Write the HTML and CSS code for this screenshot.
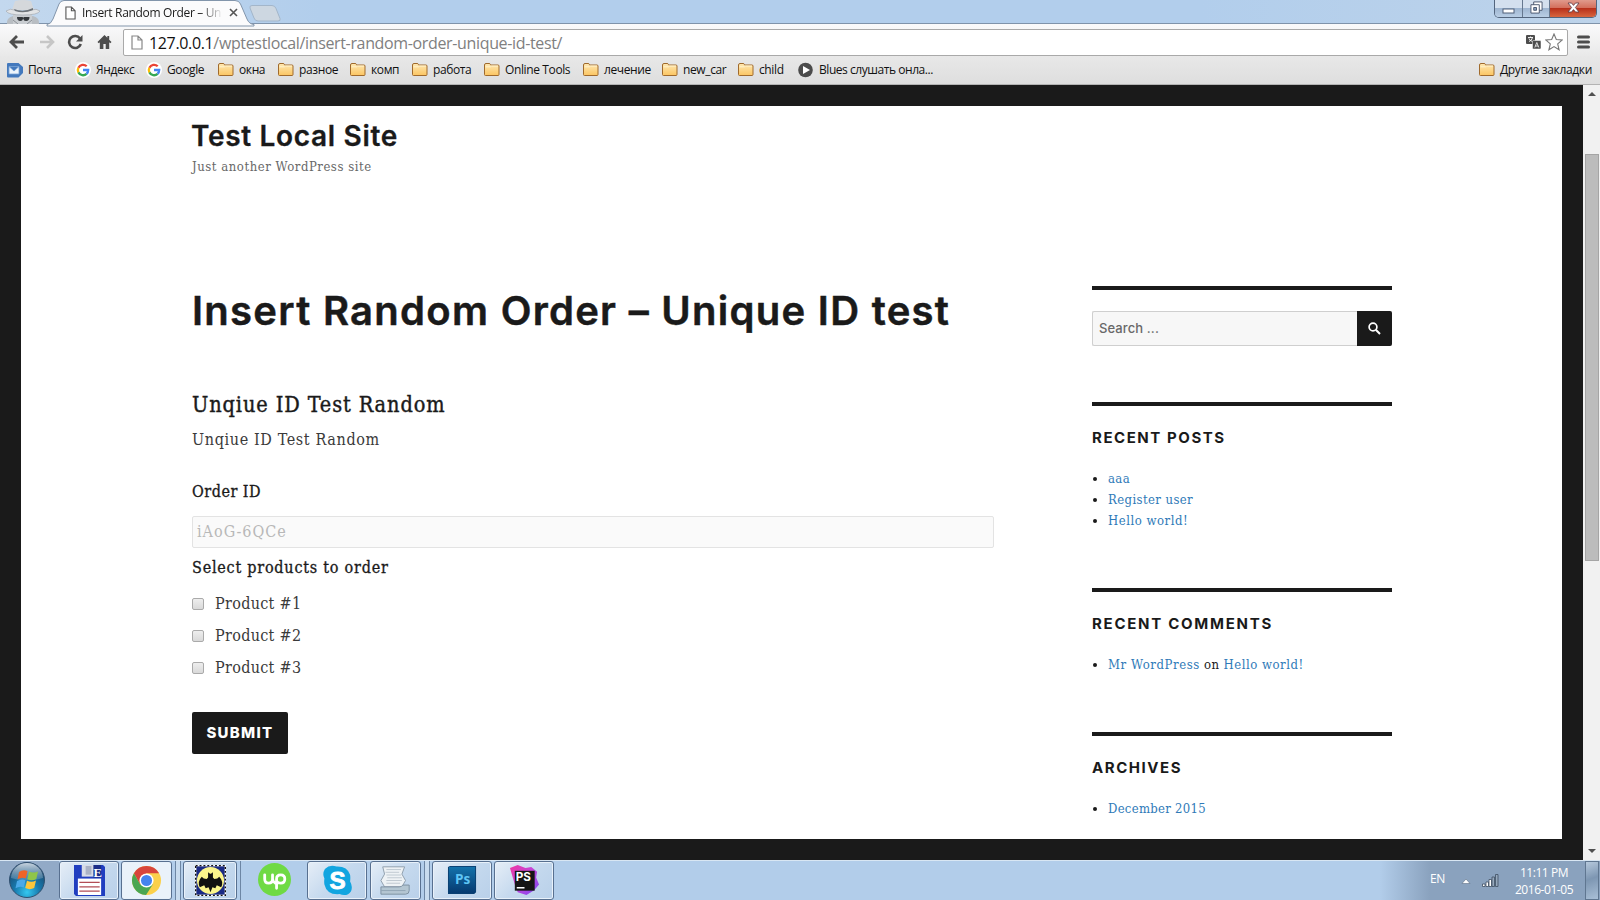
FILE: index.html
```html
<!DOCTYPE html>
<html lang="en">
<head>
<meta charset="utf-8">
<title>Insert Random Order – Unique ID test</title>
<link rel="stylesheet" href="styles.css">
</head>
<body>
<svg width="0" height="0" class="defs">
  <defs>
    <linearGradient id="fold" x1="0" y1="0" x2="0" y2="1"><stop offset="0" stop-color="#ffe9b4"/><stop offset="1" stop-color="#fbc562"/></linearGradient>
    <radialGradient id="orb" cx=".5" cy=".85" r=".8"><stop offset="0" stop-color="#35c8f0"/><stop offset=".45" stop-color="#1779ad"/><stop offset="1" stop-color="#1d4266"/></radialGradient>
    <linearGradient id="gloss" x1="0" y1="0" x2="0" y2="1"><stop offset="0" stop-color="#e4eef6" stop-opacity=".85"/><stop offset="1" stop-color="#9fb9cf" stop-opacity=".25"/></linearGradient>
    <linearGradient id="psg" x1="0" y1="0" x2="0" y2="1"><stop offset="0" stop-color="#1372ab"/><stop offset="1" stop-color="#063a70"/></linearGradient>
    <linearGradient id="storm" x1="0" y1="0" x2="1" y2="1"><stop offset="0" stop-color="#f0369f"/><stop offset=".45" stop-color="#c546d8"/><stop offset="1" stop-color="#7d48f5"/></linearGradient>
  </defs>
  <symbol id="folder" viewBox="0 0 16 16"><path d="M.500 3q0-1.500 1.500-1.500h3q1.200 0 1.500 1l.2.500h7.300q1 0 1 1v8.500q0 1-1 1H1.500q-1 0-1-1z" fill="url(#fold)" stroke="#a06a2c"/><path d="M1.500 4.800h5l1-.8h6.500" fill="none" stroke="#fff3cf"/></symbol>
  <symbol id="google" viewBox="0 0 16 16"><circle cx="8" cy="8" r="8" fill="#fff"/><g fill="none" stroke-width="2.300"><path d="M11.700 4.300A5.200 5.200 0 0 0 3.400 5.700" stroke="#ea4335"/><path d="M3.400 5.700a5.200 5.200 0 0 0 0 4.700" stroke="#fbbc05"/><path d="M3.400 10.400a5.200 5.200 0 0 0 8.200 1.400" stroke="#34a853"/><path d="M11.600 11.800A5.200 5.200 0 0 0 13.200 8H8" stroke="#4285f4"/></g></symbol>
  <symbol id="page" viewBox="0 0 12 15"><path d="M1 1h6l4 4v9H1zM7 1v4h4" fill="#fff" stroke="currentColor" stroke-width="1.200"/></symbol>
</svg>

<header class="titlebar">
  <svg class="incognito" viewBox="0 0 36 24"><path d="M2 24q-1-6 6-8l20 0q7 2 6 8z" fill="#b8bdc2"/><path d="M8 24V13h19v11z" fill="#c9cdd1"/><path d="M7 10L10 1q8-2 16 0l3 9z" fill="#d5d8db"/><path d="M1 11q5-3 8-1 9 3 18 0 4-2 8 1-2 4-17 4T1 11z" fill="#e2e4e6" stroke="#a5abb1" stroke-width=".7"/><path d="M9 9q9 4 19-1v2q-9 4-18 1z" fill="#6d7378"/><path d="M12 17h5.500l.7.800.8-.8h5.500q0 4-3.500 4-2.500 0-2.800-2.500-.7 2.500-2.700 2.500-3.500 0-3.500-4z" fill="#34383c"/><path d="M8 20l5 4M27 20l-5 4" stroke="#8b9096"/></svg>
  <div class="tab">
    <svg class="tab-shape" viewBox="0 0 208 25"><path d="M0 24.500Q4 24 6 19L12 4Q13.500.500 17 .500H188Q192 .500 193.500 4L200 19Q202 24 207 24.500V26H0z" fill="#fbfbfc" stroke="#8295ab"/></svg>
    <svg class="tab-page"><use href="#page"/></svg>
    <span class="tab-title">Insert Random Order – Un</span>
    <svg class="tab-close" viewBox="0 0 9 9"><path d="M1 1l7 7M8 1L1 8" stroke="#555" stroke-width="1.600"/></svg>
  </div>
  <svg class="newtab" viewBox="0 0 33 17"><path d="M3 .500h20q3 0 4 3l4 10q1 2.500-2 2.500H9q-3 0-4-3L1 3q-.700-2.500 2-2.500z" fill="#cdd7e1" stroke="#a3b6ca"/></svg>
  <div class="winbtns">
    <span class="wb min"><svg viewBox="0 0 14 6"><rect x="1" y="1" width="11" height="4" fill="#fff" stroke="#50607a"/></svg></span>
    <span class="wb max"><svg viewBox="0 0 14 14"><g fill="#fff" stroke="#45536b"><path d="M4 1h9v9H4z"/><path d="M1 4h9v9H1z"/><path d="M4 7h3v3H4z" fill="#8ba3c0"/></g></svg></span>
    <span class="wb close"><svg viewBox="0 0 13 11"><path d="M1 1h3.500l2 2.400 2-2.400H12L8.400 5.500 12 10H8.500l-2-2.400-2 2.400H1l3.600-4.500z" fill="#fff" stroke="#5b3a44" stroke-width=".8"/></svg></span>
  </div>
</header>

<nav class="toolbar">
  <svg class="nav back" viewBox="0 0 16 14"><path d="M15 7H2M8 1L2 7l6 6" fill="none" stroke="#4d4d4d" stroke-width="2.800"/></svg>
  <svg class="nav fwd" viewBox="0 0 16 14"><path d="M1 7h13M8 1l6 6-6 6" fill="none" stroke="#c6c6c6" stroke-width="2.600"/></svg>
  <svg class="nav reload" viewBox="0 0 16 16"><path d="M13 4.500A6 6 0 1 0 13.800 10" fill="none" stroke="#4d4d4d" stroke-width="2.600"/><path d="M15.500 1v6.500H9z" fill="#4d4d4d"/></svg>
  <svg class="nav home" viewBox="0 0 16 16"><path d="M8 .500L.500 8l1.300 1.300L3 8.200V15.500h3.800V10h2.500v5.500H13V8.200l1.200 1.100L15.500 8 13 5.500V1.500h-2v2z" fill="#4d4d4d"/></svg>
  <div class="omnibox">
    <svg class="url-page"><use href="#page"/></svg>
    <span class="url"><b>127.0.0.1</b>/wptestlocal/insert-random-order-unique-id-test/</span>
    <svg class="translate" viewBox="0 0 15 14"><rect width="9" height="9" rx="1" fill="#4d4d4d"/><path d="M2 2.500h5M4.500 1.500v1M3 6.500q3-1 3.500-4M3 3.500q1 2.500 3.500 3" stroke="#fff" fill="none" stroke-width=".9"/><rect x="6.500" y="5.500" width="8.500" height="8.500" rx="1" fill="#4d4d4d" stroke="#fff" stroke-width=".5"/><path d="M8.800 12.500l2-5 2 5M9.500 11h2.600" stroke="#ddd" fill="none"/></svg>
    <svg class="star" viewBox="0 0 18 18"><path d="M9 1l2.300 5.500 5.900.500-4.500 3.900 1.400 5.900L9 13.600l-5.100 3.200 1.400-5.900L.800 7l5.900-.500z" fill="#fff" stroke="#777" stroke-width="1.100"/></svg>
  </div>
  <svg class="menu" viewBox="0 0 13 14"><path d="M1.500 2h10M1.500 7h10M1.500 12h10" stroke="#4d4d4d" stroke-width="3" stroke-linecap="round"/></svg>
</nav>

<nav class="bookmarks">
  <a class="bm w68"><svg viewBox="0 0 16 16"><path d="M1 1h10.500L16 5v6l-4.500 4.500H1q-1 0-1-1V2q0-1 1-1z" fill="#4379bd"/><path d="M2 4.500h10v7.500H2zM2 4.500l5 4.500 5-4.500" fill="#eef5fc" stroke="#7aa3d6" stroke-width=".8"/></svg>Почта</a>
  <a class="bm w71"><svg><use href="#google"/></svg>Яндекс</a>
  <a class="bm w72"><svg><use href="#google"/></svg>Google</a>
  <a class="bm w60"><svg><use href="#folder"/></svg>окна</a>
  <a class="bm w72"><svg><use href="#folder"/></svg>разное</a>
  <a class="bm w62"><svg><use href="#folder"/></svg>комп</a>
  <a class="bm w72"><svg><use href="#folder"/></svg>работа</a>
  <a class="bm w99"><svg><use href="#folder"/></svg>Online Tools</a>
  <a class="bm w79"><svg><use href="#folder"/></svg>лечение</a>
  <a class="bm w76"><svg><use href="#folder"/></svg>new_car</a>
  <a class="bm w60"><svg><use href="#folder"/></svg>child</a>
  <a class="bm blues"><svg viewBox="0 0 16 16"><circle cx="7.500" cy="8" r="7.300" fill="#4b4b4b"/><path d="M5 4l7 4-7 4z" fill="#fff"/></svg>Blues слушать онла...</a>
  <a class="bm other"><svg><use href="#folder"/></svg>Другие закладки</a>
</nav>

<div class="viewport">
  <div class="site">
    <main class="content">
      <div class="site-title">Test Local Site</div>
      <div class="tagline">Just another WordPress site</div>
      <h1>Insert Random Order – Unique ID test</h1>
      <h3>Unqiue ID Test Random</h3>
      <p class="desc">Unqiue ID Test Random</p>
      <div class="label order-label">Order ID</div>
      <div class="field">iAoG-6QCe</div>
      <div class="label select-label">Select products to order</div>
      <div class="choice"><i></i>Product #1</div>
      <div class="choice"><i></i>Product #2</div>
      <div class="choice"><i></i>Product #3</div>
      <div class="submit">SUBMIT</div>
    </main>
    <aside class="sidebar">
      <section class="widget search-w">
        <div class="search"><span>Search ...</span><div class="search-btn"><svg viewBox="0 0 13 13"><circle cx="5" cy="5" r="3.900" fill="none" stroke="#fff" stroke-width="1.700"/><path d="M7.800 7.800l4.200 4.200" stroke="#fff" stroke-width="2"/></svg></div></div>
      </section>
      <section class="widget posts-w">
        <h2>RECENT POSTS</h2>
        <ul><li><a>aaa</a></li><li><a>Register user</a></li><li><a class="t-hello">Hello world!</a></li></ul>
      </section>
      <section class="widget comments-w">
        <h2 class="t-com">RECENT COMMENTS</h2>
        <ul><li><a class="t-mr">Mr WordPress</a> on <a class="t-hello">Hello world!</a></li></ul>
      </section>
      <section class="widget">
        <h2>ARCHIVES</h2>
        <ul><li><a class="t-dec">December 2015</a></li></ul>
      </section>
    </aside>
  </div>
  <div class="scrollbar"><span class="up"></span><div class="thumb"></div><span class="down"></span></div>
</div>

<footer class="taskbar">
  <div class="start"><svg viewBox="0 0 36 36"><circle cx="18" cy="18" r="17.500" fill="url(#orb)" stroke="#31506f"/><path d="M2 16a16 15 0 0 1 32 0q-16 5-32 0z" fill="url(#gloss)"/><path d="M10 10q4-3 8.500-1l-1.700 7.500q-4-1.800-8.300.800z" fill="#ee6427"/><path d="M20 9.500q4.500 2.200 9 0L27.300 17q-4.300 2.500-9 .300z" fill="#8fc549"/><path d="M8 19q4.500-2.700 8.500-.800L14.800 25.500q-4-2-8.300.700z" fill="#4aa9e8"/><path d="M18 18.700q4.600 2.100 9-.300l-1.800 7.700q-4.400 2.300-9 0z" fill="#fdc63a"/></svg></div>
  <div class="task t1"><svg viewBox="0 0 32 32"><path d="M0 0h30l2 2v30H2l-2-2z" fill="#203ec0"/><path d="M8 0h19v12H8z" fill="#d8dce6"/><path d="M12 1h6v9h-6z" fill="#aab2c6"/><path d="M20 0h8v13h-8z" fill="#1b2e88"/><text x="20" y="12" class="flop">E</text><path d="M4 14h24v17H4z" fill="#fff"/><path d="M5.500 18h21M5.500 22.500h21M5.500 27h21" stroke="#b24d55" stroke-width="1.200"/></svg></div>
  <div class="task t2"><svg viewBox="0 0 32 32"><circle cx="16" cy="16" r="15" fill="#fbd04b"/><path d="M3 8.500A15 15 0 0 1 29 8.500H16L9.500 20z" fill="#d8453b"/><path d="M3 8.500A15 15 0 0 0 15.500 31L22.500 20H9.500z" fill="#4aa652"/><circle cx="16" cy="16" r="7.300" fill="#fff"/><circle cx="16" cy="16" r="5.700" fill="#4483ee"/></svg></div>
  <div class="edge"></div>
  <div class="task t3"><svg viewBox="0 0 32 32"><rect x=".700" y=".700" width="30.600" height="30.600" fill="#1a2a85" stroke="#fff" stroke-width="1.400"/><rect x=".700" y=".700" width="30.600" height="30.600" fill="none" stroke="#111" stroke-width="1.400" stroke-dasharray="2 2"/><circle cx="16" cy="16" r="14" fill="#fbf58c"/><path d="M16 28l-2-5-3 1-1.500-3-4.500 2q-3-6 2-11 1.500 2.500 5 2.500l1.500-1.500V7.500l2 1.500h1l2-1.500V13l1.500 1.500q3.500 0 5-2.500 5 5 2 11l-4.500-2-1.500 3-3-1z" fill="#111"/></svg></div>
  <div class="edge e2"></div>
  <div class="task-plain"><svg viewBox="0 0 32 32"><circle cx="16" cy="16" r="16" fill="#6fda44"/><path d="M6.500 11.500v4q0 4 3.800 4t3.800-4v-4M14.100 15.500q.5 3 2.500 4M18 24.500V15.500q0-4 4-4t4 4-4 4q-2.500 0-4-2" fill="none" stroke="#fff" stroke-width="2.700" stroke-linecap="round"/></svg></div>
  <div class="task t4"><svg viewBox="0 0 32 32"><path d="M3 4q5-5 12-2.500Q26 1 29 10q.500 3 0 7 3 5 1 10-4 6-12 3Q5 31 2.500 20q-.500-3 0-6-2.500-5 .500-10z" fill="#12a5e0"/><text x="16" y="25" class="sk">S</text></svg></div>
  <div class="task t5"><svg viewBox="0 0 34 32"><path d="M3 1h24l-3 8 4 7-4 7H5l-4-7 4-7z" fill="#eef2f5" stroke="#8a9aa8"/><path d="M7 4h16M6 7h15M7 10h16M8 13h16M7 16h17M7 19h15" stroke="#bcc6cf"/><path d="M1 23h20q3 0 4-2h7v6q0 4-4 4H1z" fill="#b4c6d2" stroke="#7b8e9e"/><path d="M1 27h27" stroke="#91a5b4"/></svg></div>
  <div class="edge e3"></div>
  <div class="task t6"><svg viewBox="0 0 32 32"><path d="M1 2l2-1h27v27l-2 2H1z" fill="#0a4072"/><rect x="2" y="2" width="27" height="27" fill="url(#psg)"/><text x="16" y="20" class="ps">Ps</text></svg></div>
  <div class="task t7"><svg viewBox="0 0 32 32"><path d="M1 3L9 0l8 3 6-1 6 5-1 6 3 7-5 6-8 5-9-3-3-8z" fill="url(#storm)"/><rect x="6" y="6" width="20.500" height="20.500" fill="#151515"/><text x="7" y="16.500" class="storm">PS</text><path d="M8 23.500h8" stroke="#fff" stroke-width="1.600"/></svg></div>
  <div class="tray">
    <span class="lang">EN</span>
    <svg class="arrow" viewBox="0 0 10 6"><path d="M1 5.500L5 1l4 4.500z" fill="#fff" stroke="#5d6f84" stroke-width=".6"/></svg>
    <svg class="signal" viewBox="0 0 17 13"><g stroke="#3f4f62" stroke-width=".8"><path d="M.500 10h2.500v2.500H.500zM4 8h2.500v4.500H4zM7 5.500h2.500v7H7z" fill="#fff"/><path d="M10 3h2.500v9.500H10zM13.500.500H16v12h-2.500z" fill="#96a9bd"/></g></svg>
    <div class="clock"><div>11:11 PM</div><div>2016-01-05</div></div>
    <div class="showdesk"></div>
  </div>
</footer>
</body>
</html>
```
FILE: styles.css
```css
* { box-sizing: border-box; }
html, body { margin: 0; height: 100%; overflow: hidden; }
body { display: flex; flex-direction: column; width: 1600px; height: 900px; background: #1a1a1a; font-family: "Open Sans", "Noto Sans", sans-serif; color: #1a1a1a; }
svg { display: block; flex: none; }
.defs { position: absolute; }

/* window title bar */
.titlebar { height: 24px; flex: none; display: flex; background: linear-gradient(90deg, #c3d8ee, #b2ceec 20%, #b2ceec 75%, #bdd3ea); box-shadow: inset 0 -1px #7f93aa; }
.incognito { width: 36px; height: 24px; margin-left: 5px; }
.tab { width: 208px; height: 25px; margin-left: 6px; display: flex; align-items: center; position: relative; z-index: 1; }
.tab-shape { position: absolute; left: 0; top: 0; width: 208px; height: 25px; overflow: visible; }
.tab-page { position: relative; width: 11px; height: 14px; margin-left: 18px; color: #555; }
.tab-title { position: relative; width: 141px; margin-left: 6px; white-space: nowrap; font-size: 12px; letter-spacing: -0.34px; -webkit-mask-image: linear-gradient(90deg, #000 118px, transparent 141px); mask-image: linear-gradient(90deg, #000 118px, transparent 141px); }
.tab-close { position: relative; width: 9px; height: 9px; margin-left: 6px; }
.newtab { width: 33px; height: 17px; margin: 5px 0 0 -6px; }
.winbtns { display: flex; height: 18px; margin-left: auto; margin-right: 3px; border: 1px solid #53657d; border-top: 0; border-radius: 0 0 5px 5px; overflow: hidden; }
.wb { display: flex; align-items: center; justify-content: center; border-right: 1px solid #66788f; background: linear-gradient(#d4e0ee 0 45%, #9fb6d1 50%, #b9cee5); }
.min { width: 28px; } .max { width: 27px; } .close { width: 46px; border: 0; background: linear-gradient(#e09a8c 0, #d4705d 45%, #b8311b 50%, #d8663f); }
.min svg { width: 14px; height: 6px; margin-top: 4px; }
.max svg { width: 13px; height: 13px; margin-top: -2px; }
.close svg { width: 13px; height: 11px; margin-top: -2px; }

/* navigation bar */
.toolbar { height: 32px; flex: none; display: flex; align-items: center; padding-top: 4px; background: linear-gradient(#fafafb, #e9e9e9); }
.nav { width: 16px; height: 16px; }
.back { height: 14px; margin-left: 9px; }
.fwd { height: 14px; margin-left: 14px; }
.reload { margin-left: 12px; }
.home { width: 15px; margin-left: 14px; }
.omnibox { display: flex; align-items: center; width: 1445px; height: 27px; margin-left: 11px; background: #fff; border: 1px solid #a9a9a9; border-radius: 2px; }
.url-page { width: 12px; height: 15px; margin-left: 7px; color: #888; }
.url { margin-left: 6px; font-size: 16px; line-height: 24px; letter-spacing: -0.35px; color: #808080; white-space: nowrap; padding-top: 1px; }
.url b { font-weight: 400; color: #111; }
.translate { width: 15px; height: 14px; margin-left: auto; }
.star { width: 18px; height: 18px; margin: 0 4px 0 4px; }
.menu { width: 13px; height: 14px; margin-left: 9px; }

/* bookmarks bar */
.bookmarks { height: 29px; flex: none; display: flex; align-items: center; padding: 0 8px 0 7px; background: linear-gradient(#e8e8e8, #dedede); border-bottom: 1px solid #b3b3b3; }
.bm { display: flex; align-items: center; font-size: 12px; line-height: 16px; letter-spacing: -0.38px; color: #111; white-space: nowrap; }
.bm svg { width: 16px; height: 16px; margin-right: 5px; }
.w60 { width: 60px; } .w62 { width: 62px; } .w68 { width: 68px; } .w71 { width: 71px; } .w72 { width: 72px; } .w76 { width: 76px; } .w79 { width: 79px; } .w99 { width: 99px; }
.blues { letter-spacing: -0.45px; }
.other { margin-left: auto; letter-spacing: -0.34px; }

/* page viewport */
.viewport { height: 775px; flex: none; display: flex; background: #1a1a1a; }
.site { width: 1541px; height: 733px; margin: 21px 21px 0; display: flex; background: #fff; padding-left: 171px; overflow: hidden; }
.content { width: 802px; font-family: "DejaVu Serif Condensed", "DejaVu Serif", serif; font-stretch: condensed; font-size: 16px; }
.content > div, h1, h3, .desc, h2 { white-space: nowrap; }
.site-title { margin-top: 16px; font: 600 28px/28px Inter, sans-serif; letter-spacing: 0.68px; margin-left: -1px; -webkit-text-stroke: 0.3px #1a1a1a; }
.tagline { margin-top: 7px; font-size: 13px; line-height: 20px; letter-spacing: 0.53px; color: #686868; }
h1 { margin: 110px 0 0; font: 600 40px/48px Inter, sans-serif; letter-spacing: 1.28px; -webkit-text-stroke: 0.5px #1a1a1a; }
h3 { margin: 56px 0 0; font-size: 21.5px; font-weight: 400; line-height: 28px; letter-spacing: 0.9px; -webkit-text-stroke: 0.4px #1a1a1a; }
.desc { margin: 7px 0 0; line-height: 28px; letter-spacing: 0.63px; color: #3a3a3a; }
.label { line-height: 28px; letter-spacing: 0.77px; -webkit-text-stroke: 0.3px #1a1a1a; }
.order-label { margin-top: 24px; letter-spacing: 0.5px; }
.field { margin-top: 10px; height: 32px; line-height: 30px; padding-left: 4px; border: 1px solid #e3e3e3; border-radius: 2px; background: #fafafa; color: #b8b8b8; letter-spacing: 1px; }
.select-label { margin-top: 6px; margin-bottom: 5px; }
.choice { display: flex; align-items: center; height: 32px; line-height: 30px; padding-top: 2px; letter-spacing: 0.3px; color: #3a3a3a; }
.choice i { width: 12px; height: 12px; margin: 0 11px 0 0; border: 1px solid #aaa; border-radius: 2px; background: linear-gradient(#eee, #d9d9d9); }
.submit { width: 96px; height: 42px; margin-top: 29px; background: #1a1a1a; color: #fff; border-radius: 2px; text-align: center; font: 800 15px/41px Inter, sans-serif; letter-spacing: 1.3px; }

/* sidebar */
.sidebar { width: 300px; margin: 180px 0 0 98px; font-family: "DejaVu Serif Condensed", "DejaVu Serif", serif; font-stretch: condensed; font-size: 13px; }
.widget { border-top: 4px solid #1a1a1a; }
.search-w { height: 116px; padding-top: 21px; }
.search { display: flex; height: 35px; border: 1px solid #cfcfcf; border-right: 0; border-radius: 2px; background: #f7f7f7; font: 500 13px/33px Inter, sans-serif; letter-spacing: 0.1px; color: #686868; }
.search span { flex: 1; padding-left: 6px; }
.search-btn { width: 35px; height: 35px; margin-top: -1px; background: #1a1a1a; border-radius: 0 2px 2px 0; display: flex; align-items: center; justify-content: center; }
.search-btn svg { width: 13px; height: 13px; }
h2 { margin: 22px 0 0; font: 700 15px/20px Inter, sans-serif; letter-spacing: 1.55px; }
h2.t-com { letter-spacing: 1.72px; }
.posts-w { height: 186px; }
.comments-w { height: 144px; }
ul { list-style: none; margin: 20px 0 0; padding: 0; }
li { display: flex; align-items: center; height: 21px; line-height: 21px; letter-spacing: 0.4px; white-space: pre; }
li::before { content: ""; width: 4px; height: 4px; margin: 1px 11px 0 1px; border-radius: 50%; background: #1a1a1a; }
li a { color: #2f7ab8; }
.t-hello { letter-spacing: 0.52px; }
.t-mr { letter-spacing: 0.58px; }
.t-dec { letter-spacing: 0.28px; }

/* scrollbar */
.scrollbar { width: 17px; display: flex; flex-direction: column; align-items: center; background: #f1f1f1; }
.up, .down { width: 0; height: 0; border: 4px solid transparent; }
.up { border-bottom-color: #505050; margin-top: 3px; }
.thumb { width: 14px; height: 407px; margin-top: 58px; background: #bcbcbc; border: 1px solid #a5a5a5; }
.down { border-top-color: #505050; margin-top: auto; margin-bottom: 3px; }

/* taskbar */
.taskbar { height: 40px; flex: none; display: flex; background: linear-gradient(90deg, #b2cdea 1380px, #8aa2be 1430px); border-top: 1px solid #d8e6f3; }
.start { width: 59px; background: #92aac7; padding: 1px 0 0 9px; }
.start svg { width: 36px; height: 36px; }
.task { height: 39px; border: 1px solid #587090; border-radius: 3px; background: linear-gradient(135deg, #e6eef7, #c5d9ee 50%, #b9d0e9); box-shadow: inset 0 0 0 1px #e8f1fa; display: flex; justify-content: center; padding-top: 3px; }
.task svg { width: 31px; height: 31px; }
.t1 { width: 60px; } .t2 { width: 51px; margin-left: 2px; background: #eaf2fa; } .t3 { width: 54px; margin-left: 2px; } .t4 { width: 60px; } .t5 { width: 51px; margin-left: 3px; } .t6 { width: 60px; margin-left: 2px; } .t7 { width: 60px; margin-left: 2px; }
.edge { width: 9px; border-right: 1px solid #6d86a4; box-shadow: inset -4px 0 #c8dbee, inset -5px 0 #6d86a4; }
.e2 { width: 4px; box-shadow: none; }
.task-plain { width: 66px; padding: 2px 0 0 17px; }
.task-plain svg { width: 33px; height: 33px; }
.flop { font: bold 13px "Liberation Serif", serif; fill: #fff; }
.sk { font: bold 25px "Liberation Sans", sans-serif; fill: #fff; stroke: #fff; stroke-width: 0.8px; text-anchor: middle; }
.ps { font: bold 14px "Open Sans", sans-serif; fill: #5fc5f5; text-anchor: middle; }
.storm { font: 700 12px Inter, sans-serif; fill: #fff; }
.tray { display: flex; align-items: center; margin-left: auto; height: 39px; color: #fff; font-size: 12px; }
.lang { margin-right: 16px; margin-top: -4px; letter-spacing: -0.3px; }
.arrow { width: 10px; height: 6px; margin-right: 11px; }
.signal { width: 17px; height: 13px; margin-right: 15px; }
.clock { width: 60px; text-align: center; line-height: 17px; letter-spacing: -0.45px; margin: 0 11px 0 0; white-space: nowrap; }
.showdesk { width: 14px; height: 39px; margin-right: 1px; border: 1px solid #5f7690; background: linear-gradient(160deg, #b5c8dc, #7d96b2 45%, #a9bfd6); }
```
